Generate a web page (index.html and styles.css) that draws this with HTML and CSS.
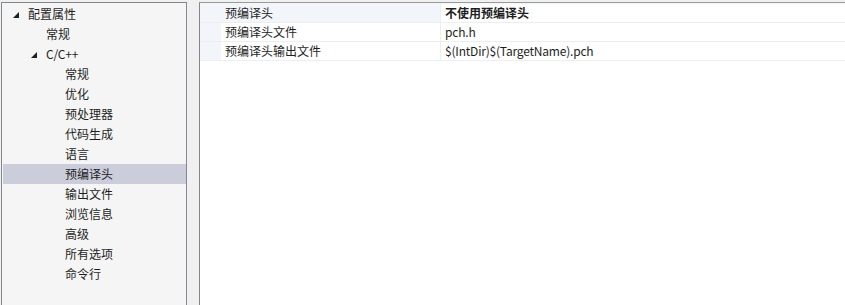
FILE: index.html
```html
<!DOCTYPE html>
<html lang="zh-CN">
<head>
<meta charset="utf-8">
<link rel="stylesheet" href="styles.css">
</head>
<body>
<div class="layout">
  <div class="tree">
    <div class="node lvl0"><svg class="tri" width="6" height="6" viewBox="0 0 6 6"><polygon points="6,0 6,6 0,6"/></svg>配置属性</div>
    <div class="node lvl1">常规</div>
    <div class="node lvl1 exp"><svg class="tri" width="6" height="6" viewBox="0 0 6 6"><polygon points="6,0 6,6 0,6"/></svg><span class="latin">C/C++</span></div>
    <div class="node lvl2">常规</div>
    <div class="node lvl2">优化</div>
    <div class="node lvl2">预处理器</div>
    <div class="node lvl2">代码生成</div>
    <div class="node lvl2">语言</div>
    <div class="node lvl2 sel">预编译头</div>
    <div class="node lvl2">输出文件</div>
    <div class="node lvl2">浏览信息</div>
    <div class="node lvl2">高级</div>
    <div class="node lvl2">所有选项</div>
    <div class="node lvl2">命令行</div>
  </div>
  <div class="grid">
    <div class="props">
      <div class="strip"></div>
      <div class="name first">预编译头</div>
      <div class="val bold">不使用预编译头</div>
      <div class="strip"></div>
      <div class="name">预编译头文件</div>
      <div class="val latin">pch.h</div>
      <div class="strip"></div>
      <div class="name">预编译头输出文件</div>
      <div class="val latin">$(IntDir)$(TargetName).pch</div>
    </div>
  </div>
</div>
</body>
</html>
```

FILE: styles.css
```css
html, body {
  margin: 0;
  padding: 0;
  height: 100%;
  background: #f0f0f0;
  overflow: hidden;
}
body {
  font-family: "Noto Sans CJK SC", "Noto Sans", sans-serif;
  font-size: 12px;
  color: #1e1e1e;
}
.layout {
  display: flex;
  gap: 12px;
  padding: 2px 0 0 1px;
  height: 100vh;
  box-sizing: border-box;
}
.tree {
  width: 184px;
  flex: none;
  border: 1px solid #828790;
  border-bottom: 0;
  background: #f5f5f5;
  padding-top: 1px;
}
.node {
  height: 20px;
  line-height: 20px;
  margin-left: 1px;
  display: flex;
  align-items: center;
  white-space: nowrap;
}
.tri {
  flex: none;
  fill: #1e1e1e;
  margin-right: 9px;
  margin-top: 1px;
}
.lvl0 { padding-left: 10px; }
.lvl1 { padding-left: 43px; }
.lvl1.exp { padding-left: 28px; }
.lvl2 { padding-left: 62px; }
.sel { background: #cbcdda; }
.latin { letter-spacing: -0.2px; }
.grid {
  flex: 1;
  border-top: 1px solid #9a9a9a;
  border-left: 1px solid #828790;
  background: #fff;
  margin-right: -4px;
}
.props {
  display: grid;
  grid-template-columns: 21px 220px 1fr;
  background: #f2f5fa;
  padding-top: 1px;
}
.props > div {
  height: 19px;
  box-sizing: border-box;
  border-bottom: 1px solid #eceef4;
  line-height: 18px;
  white-space: nowrap;
}
.strip { background: #f2f5fa; }
.name {
  background: #fff;
  padding-left: 4px;
  border-right: 1px solid #eceef4;
}
.name.first { background: #f2f5fa; }
.val {
  background: #fff;
  padding-left: 4px;
}
.bold { font-weight: bold; }
```
